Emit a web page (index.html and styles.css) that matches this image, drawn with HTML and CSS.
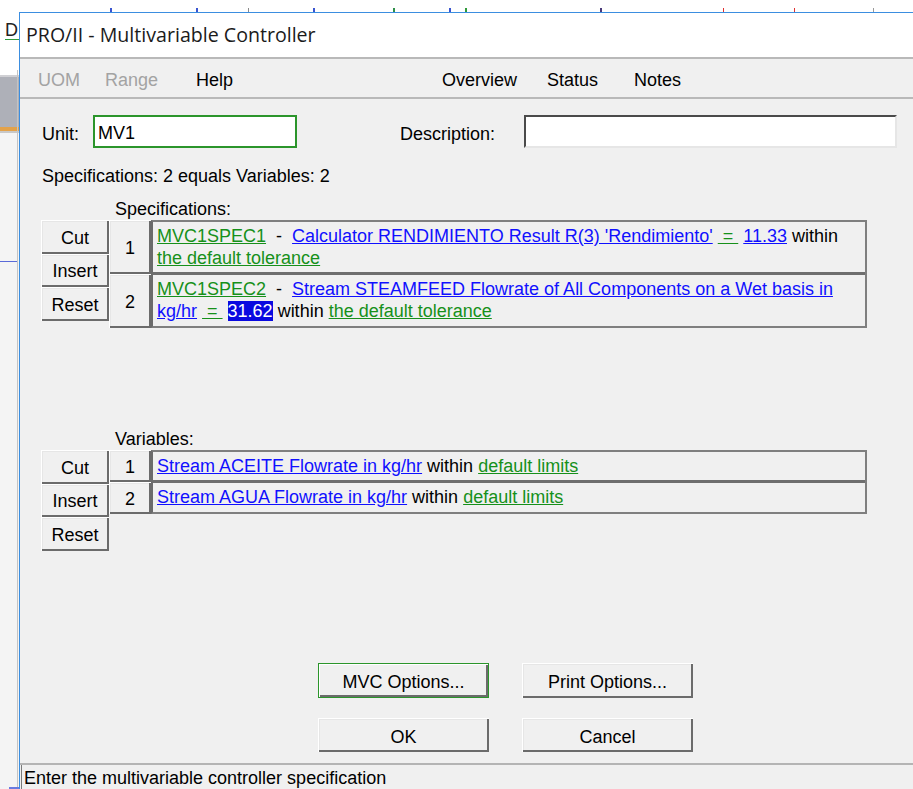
FILE: index.html
```html
<!DOCTYPE html>
<html lang="en">
<head>
<meta charset="utf-8">
<title>PRO/II - Multivariable Controller</title>
<link rel="stylesheet" href="styles.css">
</head>
<body>
<div class="screen">
  <!-- edge of the flowsheet window lying behind the dialog -->
  <svg class="backdrop-top" width="913" height="12" viewBox="0 0 913 12" aria-hidden="true">
    <rect width="913" height="12" fill="#ffffff"/>
    <rect x="110" y="8" width="2" height="4" fill="#3a55d0"/>
    <rect x="196" y="8" width="2" height="4" fill="#3a55d0"/>
    <rect x="248" y="8" width="1" height="4" fill="#8a8a8a"/>
    <rect x="313" y="8" width="2" height="4" fill="#3a55d0"/>
    <rect x="393" y="8" width="2" height="4" fill="#2f8f4a"/>
    <rect x="449" y="8" width="2" height="4" fill="#3a55d0"/>
    <rect x="465" y="8" width="2" height="4" fill="#2f9a3a"/>
    <rect x="600" y="8" width="2" height="4" fill="#4a3a7a"/>
    <rect x="723" y="8" width="1" height="4" fill="#e03030"/>
    <rect x="794" y="8" width="1" height="4" fill="#e03030"/>
    <rect x="873" y="8" width="1" height="4" fill="#9a9a9a"/>
  </svg>
  <svg class="backdrop-left" width="19" height="777" viewBox="0 0 19 777" aria-hidden="true">
    <rect width="19" height="777" fill="#f4f4f4"/>
    <rect width="19" height="63" fill="#ffffff"/>
    <text x="5" y="24" font-family="Liberation Sans, Arial, sans-serif" font-size="18" fill="#222">D</text>
    <rect x="5" y="27" width="14" height="1" fill="#2f9a3a"/>
    <rect x="0" y="63" width="19" height="2" fill="#d0d0d4"/>
    <rect x="0" y="65" width="19" height="50" fill="#aeb0b8"/>
    <rect x="0" y="115" width="19" height="4" fill="#e3a24a"/>
    <rect x="0" y="119" width="19" height="2" fill="#c8c8c8"/>
    <rect x="17" y="58" width="1" height="719" fill="#c4c4c4"/>
    <rect x="0" y="249" width="17" height="1" fill="#5a6ad8"/>
    <rect x="9" y="775" width="10" height="2" fill="#6a7ae0"/>
  </svg>

  <div class="window">
    <div class="titlebar">PRO/II - Multivariable Controller</div>

    <div class="menubar">
      <span class="menu m-uom off">UOM</span>
      <span class="menu m-range off">Range</span>
      <span class="menu m-help">Help</span>
      <span class="menu m-overview">Overview</span>
      <span class="menu m-status">Status</span>
      <span class="menu m-notes">Notes</span>
    </div>

    <div class="dlg">
      <div class="unit-row">
        <span class="lbl-unit">Unit:</span>
        <div class="field field-unit">MV1</div>
        <span class="lbl-desc">Description:</span>
        <div class="field field-desc"></div>
      </div>

      <p class="summary">Specifications: 2 equals Variables: 2</p>

      <div class="sect-label">Specifications:</div>
      <div class="tbl">
        <div class="tbtns">
          <button class="btn b-top">Cut</button>
          <button class="btn b-mid">Insert</button>
          <button class="btn b-top">Reset</button>
        </div>
        <div class="nums">
          <div class="num num-spec">1</div>
          <div class="num num-spec">2</div>
        </div>
        <div class="cells">
          <div class="row row-spec1">
            <a class="g">MVC1SPEC1</a>&nbsp; - &nbsp;<a class="b">Calculator RENDIMIENTO Result R(3) 'Rendimiento'</a> <a class="g">&nbsp;=&nbsp;</a> <a class="b">11.33</a> within<br>
            <a class="g">the default tolerance</a>
          </div>
          <div class="row row-spec2">
            <a class="g">MVC1SPEC2</a>&nbsp; - &nbsp;<a class="b">Stream STEAMFEED Flowrate of All Components on a Wet basis in<br>kg/hr</a> <a class="g">&nbsp;=&nbsp;</a> <span class="sel">31.62</span> within <a class="g">the default tolerance</a>
          </div>
        </div>
      </div>

      <div class="sect-label sect-vars">Variables:</div>
      <div class="tbl">
        <div class="tbtns">
          <button class="btn b-top">Cut</button>
          <button class="btn b-mid">Insert</button>
          <button class="btn b-top">Reset</button>
        </div>
        <div class="nums">
          <div class="num num-var">1</div>
          <div class="num num-var">2</div>
        </div>
        <div class="cells cells-var">
          <div class="row row-var1"><a class="b">Stream ACEITE Flowrate in kg/hr</a> within <a class="g">default limits</a></div>
          <div class="row row-var2"><a class="b">Stream AGUA Flowrate in kg/hr</a> within <a class="g">default limits</a></div>
        </div>
      </div>

      <div class="actions">
        <button class="btn act act-focus">MVC Options...</button>
        <button class="btn act">Print Options...</button>
        <button class="btn act act-low">OK</button>
        <button class="btn act act-low">Cancel</button>
      </div>
    </div>

    <div class="statusbar">
      <div class="status-panel">Enter the multivariable controller specification</div>
    </div>
  </div>
</div>
</body>
</html>
```

FILE: styles.css
```css
html, body {
  margin: 0;
  padding: 0;
}

body {
  width: 913px;
  height: 789px;
  overflow: hidden;
  background: #ffffff;
  font-family: "Liberation Sans", Arial, sans-serif;
  font-size: 18px;
  color: #000;
}

.screen {
  display: grid;
  grid-template-columns: 19px 894px;
  grid-template-rows: 12px 777px;
  width: 913px;
  height: 789px;
}

.backdrop-top {
  grid-column: 1 / 3;
  display: block;
}

.backdrop-left {
  display: block;
}

/* dialog window */
.window {
  border-top: 1px solid #3b8ee0;
  border-left: 1px solid #3b8ee0;
  background: #f0f0f0;
  display: flex;
  flex-direction: column;
  overflow: hidden;
  min-height: 0;
}

.titlebar {
  height: 44px;
  line-height: 43px;
  background: #ffffff;
  padding-left: 6px;
  font-family: "Open Sans", "Noto Sans", sans-serif;
  font-size: 19.6px;
  color: #1b1b1b;
  white-space: nowrap;
}

.menubar {
  border-top: 2px solid #b9b9b9;
  border-bottom: 2px solid #b9b9b9;
  display: flex;
  align-items: center;
  padding: 5px 0 0 18px;
  box-sizing: content-box;
  height: 33px;
  white-space: nowrap;
}

.menu { display: block; }
.menu.off { color: #a3a3a3; }
.m-uom { width: 67px; }
.m-range { width: 91px; }
.m-help { width: 246px; }
.m-overview { width: 105px; }
.m-status { width: 87px; }

/* dialog body */
.dlg {
  flex: 1;
  min-height: 0;
  padding: 16px 0 0 21px;
}

.unit-row {
  display: flex;
  align-items: center;
  height: 33px;
}

.lbl-unit,
.lbl-desc {
  padding-top: 5px;
  box-sizing: border-box;
}

.lbl-unit {
  width: 52px;
  padding-left: 1px;
}

.field {
  height: 33px;
  box-sizing: border-box;
  background: #ffffff;
  line-height: 25px;
  padding-top: 4px;
  white-space: nowrap;
}

.field-unit {
  width: 204px;
  border: 2px solid #2b952b;
  padding-left: 3px;
}

.lbl-desc {
  margin-left: 103px;
  width: 124px;
}

.field-desc {
  width: 373px;
  border-top: 2px solid #4a4a4a;
  border-left: 2px solid #4a4a4a;
  border-right: 2px solid #e6e6e6;
  border-bottom: 2px solid #e6e6e6;
}

.summary {
  margin: 17px 0 0 1px;
  line-height: 22px;
}

.sect-label {
  margin: 11px 0 0 74px;
  line-height: 22px;
}

.sect-vars {
  margin-top: 100px;
}

/* specification / variable tables */
.tbl {
  display: flex;
  align-items: flex-start;
}

.tbtns {
  display: flex;
  flex-direction: column;
  width: 68px;
}

.btn {
  font: inherit;
  color: #000;
  background: #f0f0f0;
  border: none;
  padding: 2px 0 0;
  margin: 0;
  box-shadow: inset 1px 1px #ffffff, inset -2px -2px #6b6b6b, inset 2px 2px #e6e6e6;
  display: flex;
  align-items: center;
  justify-content: center;
}

.b-top { height: 34px; }
.b-mid { height: 33px; }

.nums {
  display: flex;
  flex-direction: column;
  width: 42px;
}

.num {
  display: flex;
  align-items: center;
  justify-content: center;
  padding-top: 2px;
  box-sizing: border-box;
  box-shadow: inset 1px 1px #ffffff, inset -2px -2px #6b6b6b, inset 2px 2px #e6e6e6;
}

.num-spec { height: 54px; }
.num-var { height: 32px; }

.cells {
  width: 716px;
  box-sizing: border-box;
  border: 2px solid #7f7f7f;
  border-left-color: #6b6b6b;
}

.row {
  padding: 3px 0 0 4px;
  line-height: 22px;
  box-sizing: border-box;
  white-space: nowrap;
}

.row + .row {
  border-top: 3px solid #6e6e6e;
}

.row-spec1 { height: 50px; }
.row-spec2 { height: 54px; }
.row-var1 { height: 28px; }
.row-var2 { height: 32px; padding-top: 3px; }

a.b {
  color: #1010ff;
  text-decoration: underline;
}

a.g {
  color: #16901a;
  text-decoration: underline;
}

.sel {
  background: #0a0ae0;
  color: #ffffff;
}

/* option and confirm buttons */
.actions {
  display: grid;
  grid-template-columns: 171px 171px;
  column-gap: 33px;
  row-gap: 20px;
  margin: 112px 0 0 277px;
}

.act { height: 35px; padding-top: 4px; }
.act-low { height: 34px; }

.act-focus {
  box-shadow: inset 0 0 0 1px #2b952b, inset 2px 2px #ffffff, inset -3px -3px #6b6b6b;
}

/* status line */
.statusbar {
  height: 24px;
  flex: none;
  border-top: 2px solid #b4b4b4;
  padding-left: 1px;
}

.status-panel {
  border-left: 1px solid #7a7a7a;
  padding: 2px 0 0 2px;
  line-height: 22px;
  height: 22px;
  white-space: nowrap;
}
```
